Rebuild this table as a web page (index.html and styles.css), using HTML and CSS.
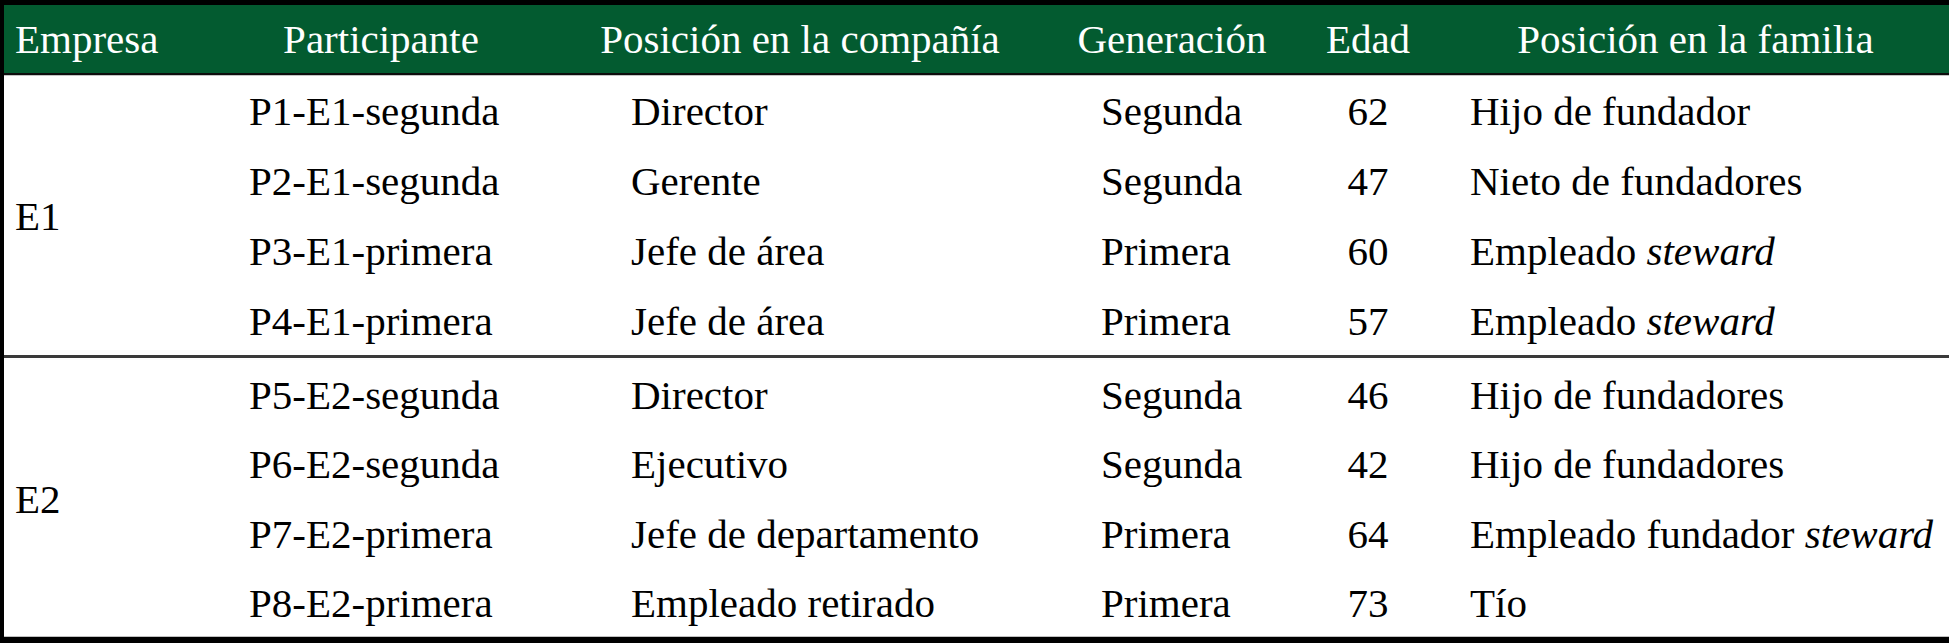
FILE: index.html
```html
<!DOCTYPE html>
<html lang="es">
<head>
<meta charset="utf-8">
<title>Participantes</title>
<link rel="stylesheet" href="styles.css">
</head>
<body>
<div class="frame">
  <div class="row head">
    <div class="cell c1">Empresa</div>
    <div class="cell c2 center">Participante</div>
    <div class="cell c3 center">Posición en la compañía</div>
    <div class="cell c4 center">Generación</div>
    <div class="cell c5 center">Edad</div>
    <div class="cell c6 center">Posición en la familia</div>
  </div>
  <div class="body">
    <div class="group first">
      <div class="cell company">E1</div>
      <div class="cell c2">P1-E1-segunda</div><div class="cell c3">Director</div><div class="cell c4">Segunda</div><div class="cell c5">62</div><div class="cell c6">Hijo de fundador</div>
      <div class="cell c2">P2-E1-segunda</div><div class="cell c3">Gerente</div><div class="cell c4">Segunda</div><div class="cell c5">47</div><div class="cell c6">Nieto de fundadores</div>
      <div class="cell c2">P3-E1-primera</div><div class="cell c3">Jefe de área</div><div class="cell c4">Primera</div><div class="cell c5">60</div><div class="cell c6">Empleado&nbsp;<em>steward</em></div>
      <div class="cell c2">P4-E1-primera</div><div class="cell c3">Jefe de área</div><div class="cell c4">Primera</div><div class="cell c5">57</div><div class="cell c6">Empleado&nbsp;<em>steward</em></div>
    </div>
    <div class="group second">
      <div class="cell company">E2</div>
      <div class="cell c2">P5-E2-segunda</div><div class="cell c3">Director</div><div class="cell c4">Segunda</div><div class="cell c5">46</div><div class="cell c6">Hijo de fundadores</div>
      <div class="cell c2">P6-E2-segunda</div><div class="cell c3">Ejecutivo</div><div class="cell c4">Segunda</div><div class="cell c5">42</div><div class="cell c6">Hijo de fundadores</div>
      <div class="cell c2">P7-E2-primera</div><div class="cell c3">Jefe de departamento</div><div class="cell c4">Primera</div><div class="cell c5">64</div><div class="cell c6">Empleado fundador&nbsp;<em>steward</em></div>
      <div class="cell c2">P8-E2-primera</div><div class="cell c3">Empleado retirado</div><div class="cell c4">Primera</div><div class="cell c5">73</div><div class="cell c6">Tío</div>
    </div>
  </div>
</div>
</body>
</html>
```

FILE: styles.css
```css
html, body {
  margin: 0;
  padding: 0;
  background: #ffffff;
}

.frame {
  width: 1945px;
  border-left: 4px solid #000;
  border-top: 5px solid #000;
  border-bottom: 6px solid #000;
  font-family: "Liberation Serif", "Times New Roman", serif;
  font-size: 41px;
  color: #000;
}

.row, .group {
  display: grid;
  grid-template-columns: 196px 362px 476px 268px 124px 519px;
}

.head {
  height: 68px;
  background: #035b30;
  color: #fff;
  border-bottom: 2px solid #0d0d0d;
  box-shadow: 0 1px 0 #c4c4c4;
  position: relative;
}

.cell {
  display: flex;
  align-items: center;
  white-space: nowrap;
}

.head .cell {
  line-height: 68px;
}

.center {
  justify-content: center;
}

.head .c1 { padding-left: 11px; }
.head .c6 { padding-left: 12px; }

.body {
  border-bottom: 1px solid #c0c0c0;
}

.group {
  grid-template-rows: repeat(4, 70px);
}

.group.first .cell {
  padding-top: 2px;
}

.group.second {
  grid-template-rows: repeat(4, 69.5px);
  border-top: 3px solid #3a3a3a;
}

.group.second .cell {
  padding-top: 4px;
}

.company {
  grid-row: 1 / span 4;
  grid-column: 1;
  padding-left: 11px;
}

.group .c2 { padding-left: 49px; }
.group .c3 { padding-left: 69px; }
.group .c4 { padding-left: 63px; }
.group .c5 { justify-content: center; }
.group .c6 { padding-left: 40px; }

em {
  font-style: italic;
}
```
